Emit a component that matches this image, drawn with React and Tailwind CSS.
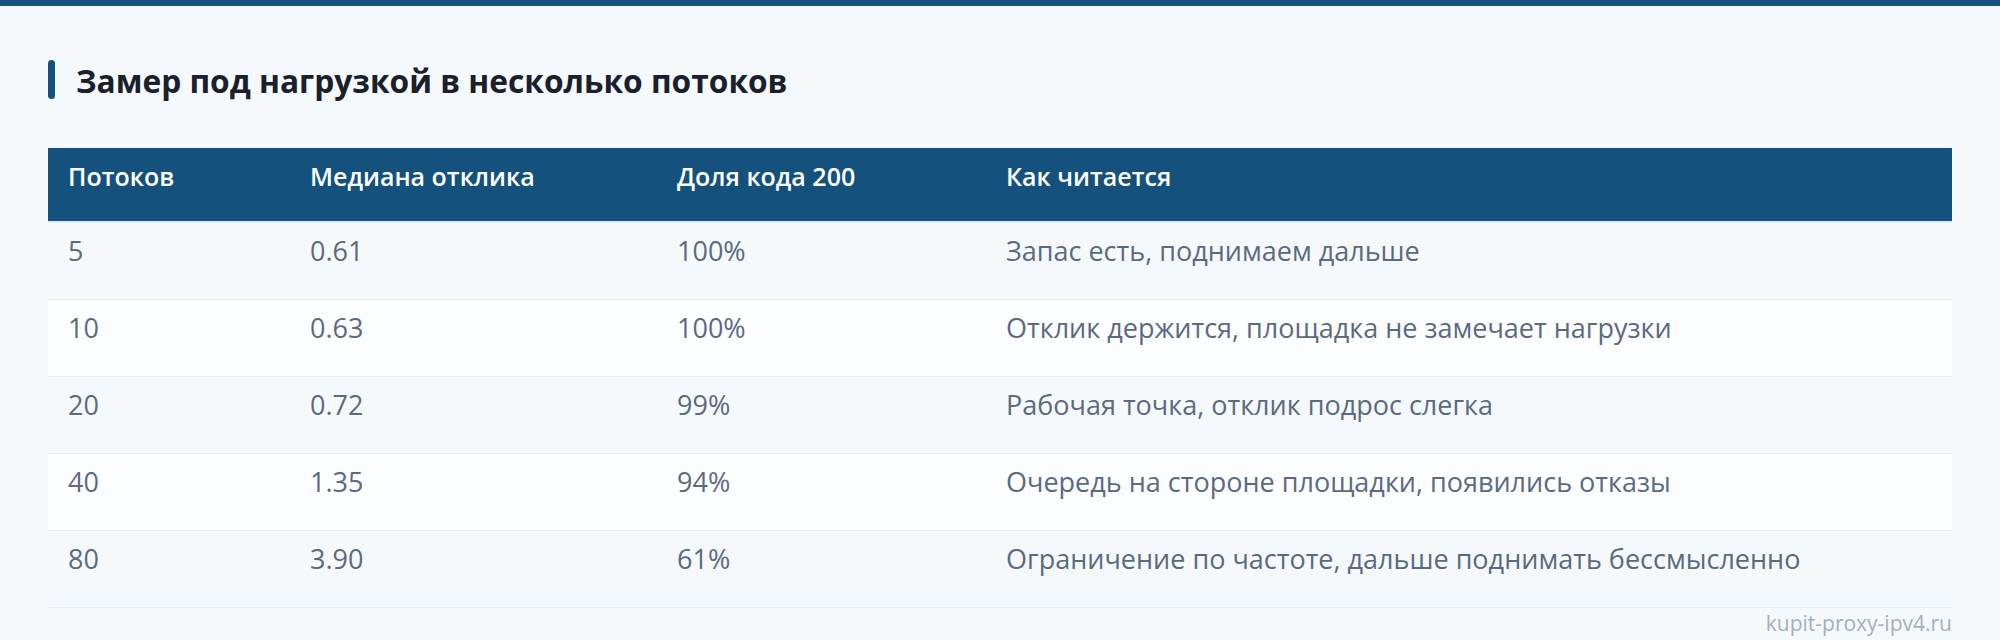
export default function App() {
  const rows = [
    ["5", "0.61", "100%", "Запас есть, поднимаем дальше"],
    ["10", "0.63", "100%", "Отклик держится, площадка не замечает нагрузки"],
    ["20", "0.72", "99%", "Рабочая точка, отклик подрос слегка"],
    ["40", "1.35", "94%", "Очередь на стороне площадки, появились отказы"],
    ["80", "3.90", "61%", "Ограничение по частоте, дальше поднимать бессмысленно"],
  ];
  return (
    <div className="min-h-[640px] bg-[#f5f9fc] font-['Open_Sans',sans-serif]">
      <div className="h-[6px] bg-[#14517d]" />
      <div className="px-12 pt-[54px]">
        <div className="flex items-center gap-[21px] h-[39px]">
          <div className="w-[7px] h-full rounded-full bg-[#14517d]" />
          <h2 className="text-[31.7px] font-bold text-[#1a202c] leading-none pt-[3px]">
            Замер под нагрузкой в несколько потоков
          </h2>
        </div>
        <table className="mt-[49px] w-full border-collapse table-fixed">
          <colgroup>
            <col className="w-[242px]" />
            <col className="w-[367px]" />
            <col className="w-[329px]" />
            <col />
          </colgroup>
          <thead>
            <tr className="bg-[#14517d] h-[74px] border-b-2 border-[#dde7ef]">
              {["Потоков", "Медиана отклика", "Доля кода 200", "Как читается"].map((h) => (
                <th
                  key={h}
                  className="text-left align-top font-semibold text-white text-[25px] leading-[1.5] px-5 pt-[10px]"
                >
                  {h}
                </th>
              ))}
            </tr>
          </thead>
          <tbody>
            {rows.map((r, i) => (
              <tr
                key={i}
                className={
                  "h-[77px] border-b border-[#e8eef3] " +
                  (i % 2 === 1 ? "bg-[#fcfdfe]" : "bg-[#f5f9fc]")
                }
              >
                {r.map((c, j) => (
                  <td
                    key={j}
                    className="px-5 align-top pt-[8px] text-[27px] leading-[1.5] text-[#5b6a80]"
                  >
                    {c}
                  </td>
                ))}
              </tr>
            ))}
          </tbody>
        </table>
        <div className="text-right text-[21px] leading-none text-[#a3b0bf] pt-[5px]">kupit-proxy-ipv4.ru</div>
      </div>
    </div>
  );
}
